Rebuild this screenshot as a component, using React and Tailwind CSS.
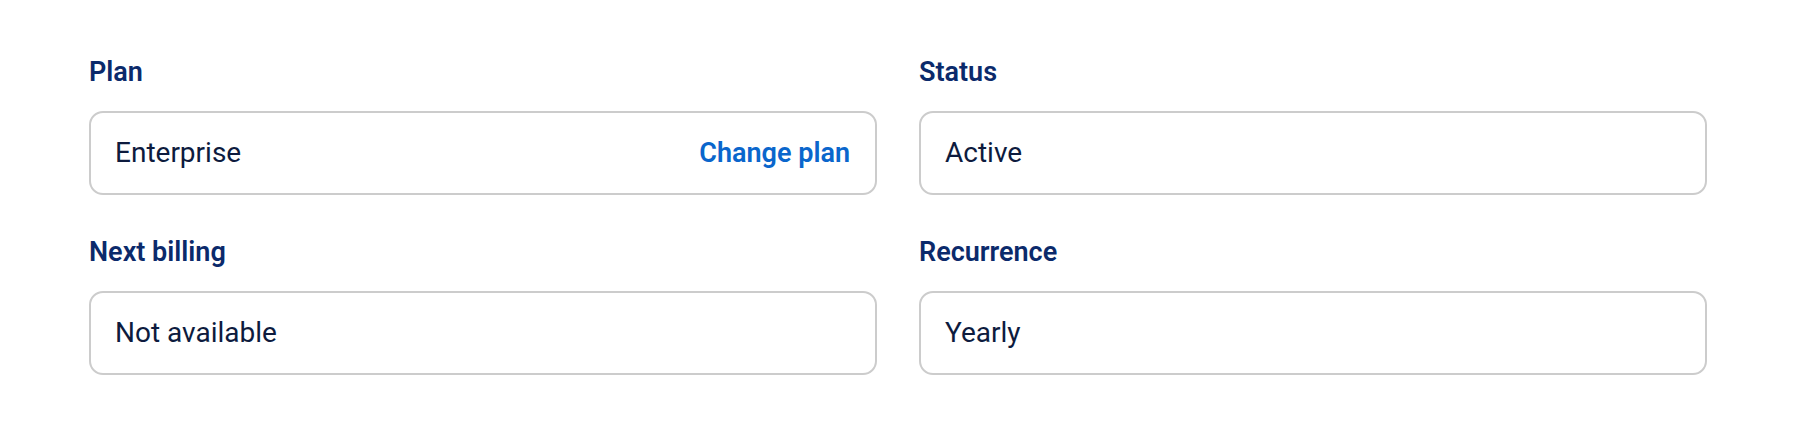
import React from 'react';

const fields = [
    { label: 'Plan', value: 'Enterprise', action: 'Change plan' },
    { label: 'Status', value: 'Active' },
    { label: 'Next billing', value: 'Not available' },
    { label: 'Recurrence', value: 'Yearly' },
];

const Field = ({ label, value, action }) => (
    <div className="flex flex-col">
        <span className="text-[27px] leading-8 font-semibold text-[#0b2a6b]">{label}</span>
        <div className="mt-[23px] h-[84px] flex items-center justify-between rounded-[14px] border-2 border-[#cccccc] bg-white pl-[24px] pr-[25px]">
            <span className="text-[28px] leading-8 text-[#0d1b3e]">{value}</span>
            {action && (
                <button className="text-[27px] leading-8 font-semibold text-[#0a66cc] hover:underline">
                    {action}
                </button>
            )}
        </div>
    </div>
);

export default function App() {
    return (
        <div className="min-h-[435px] w-full bg-white px-[89px] pt-[56px] font-['Roboto',sans-serif]">
            <div className="grid grid-cols-2 gap-x-[42px] gap-y-[41px]">
                {fields.map((f) => (
                    <Field key={f.label} {...f} />
                ))}
            </div>
        </div>
    );
}
